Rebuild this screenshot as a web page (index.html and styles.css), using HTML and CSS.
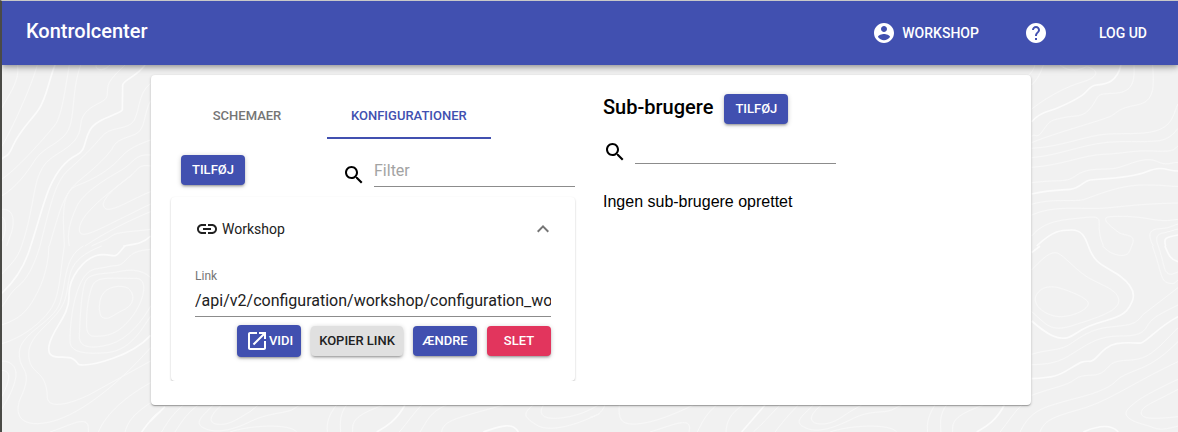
FILE: index.html
```html
<!DOCTYPE html>
<html lang="da">
<head>
<meta charset="utf-8">
<meta name="viewport" content="width=device-width, initial-scale=1">
<title>Kontrolcenter</title>
<link rel="stylesheet" href="styles.css">
</head>
<body>
<header class="app-bar">
  <h1 class="app-title">Kontrolcenter</h1>
  <nav class="app-nav">
    <a class="nav-link" href="#workshop">
      <svg class="icon" viewBox="0 0 24 24" aria-hidden="true"><path d="M12 2C6.480 2 2 6.480 2 12s4.480 10 10 10 10-4.480 10-10S17.520 2 12 2zm0 3c1.660 0 3 1.340 3 3s-1.340 3-3 3-3-1.340-3-3 1.340-3 3-3zm0 14.200c-2.500 0-4.710-1.280-6-3.220.030-1.990 4-3.080 6-3.080 1.990 0 5.970 1.090 6 3.080-1.290 1.940-3.500 3.220-6 3.220z"/></svg>
      Workshop
    </a>
    <a class="nav-link nav-help" href="#help" aria-label="Hjælp">
      <svg class="icon" viewBox="0 0 24 24" aria-hidden="true"><path d="M12 2C6.480 2 2 6.480 2 12s4.480 10 10 10 10-4.480 10-10S17.520 2 12 2zm1 17h-2v-2h2v2zm2.070-7.750l-.900.920C13.450 12.900 13 13.500 13 15h-2v-.500c0-1.100.450-2.100 1.170-2.830l1.240-1.260c.370-.360.590-.860.590-1.410 0-1.100-.900-2-2-2s-2 .900-2 2H8c0-2.210 1.790-4 4-4s4 1.790 4 4c0 .880-.360 1.680-.930 2.250z"/></svg>
    </a>
    <a class="nav-link" href="#logout">Log ud</a>
  </nav>
</header>

<main class="page">
  <svg class="contours" viewBox="0 65 1178 367" preserveAspectRatio="xMidYMin slice" aria-hidden="true">
    <g transform="translate(0 60) scale(.33333)">
      <path d="M53 15C60 65 25 105 5 145M112 15C95 75 45 190 5 260M208 15M248 15M208 15C195 90 185 170 165 195S60 320 5 358M242 15C215 90 225 170 205 210S130 260 105 300 45 385 5 408"/>
      <path d="M288 15C286 35 315 32 330 15M375 15C350 40 325 60 323 85S325 115 300 128 245 155 242 195 215 255 180 277 130 310 115 350 95 470 65 558"/>
      <path d="M452 70C410 100 420 170 395 190S330 200 305 230 245 295 205 330 150 440 120 558M452 122C430 160 438 210 405 223S350 240 340 260 290 320 240 360 180 450 148 558M452 240C380 265 370 285 350 305S290 355 235 375 190 470 193 558"/>
      <path d="M452 285C405 280 400 310 365 330S250 395 230 440 200 520 208 558M452 318C420 312 415 325 395 345S235 455 238 510C240 545 300 505 452 432M452 395C400 415 340 455 318 447 290 430 340 385 395 345M452 455C390 480 310 520 255 558M452 508C400 515 350 515 335 528S300 545 275 558M5 448C40 445 45 480 35 515L20 558M5 470C22 480 18 520 5 545"/>
      <path class="major" d="M165 15C145 65 140 115 115 150S60 210 40 255 20 280 5 298M435 15C410 50 370 60 368 75L367 150C355 165 290 175 270 210S260 270 230 285 170 335 150 380 115 490 92 558M452 528C430 550 410 552 370 558"/>
    </g>
    <g transform="translate(0 246) scale(.33333)">
      <path d="M65 0C50 45 25 60 5 85M120 0C100 65 80 100 55 120S20 165 5 183M147 0C145 75 120 130 95 170S40 225 5 237M193 0C180 80 180 145 155 185S70 275 5 293"/>
      <path d="M250 0C190 35 200 110 180 170S60 260 58 320 105 365 60 460C45 500 55 545 140 530S340 430 452 305M305 0C190 45 215 95 195 160S85 260 86 325 140 365 142 455C145 490 210 475 270 445L452 345"/>
      <path d="M452 10C400 15 395 25 375 45S350 55 320 63 265 60 240 115 210 250 210 285 255 325 320 320 420 260 452 210M452 95C420 65 380 72 350 78S275 80 260 100 240 210 238 275C240 305 275 310 330 295S430 220 452 180M290 105C305 92 360 98 405 97 450 95 432 170 390 220S315 270 285 271 260 240 260 215 270 110 290 105zM305 150C318 120 365 115 385 127 405 145 405 175 370 192S325 225 305 213C295 200 297 165 305 150z"/>
      <path d="M5 345C40 345 55 370 45 405S25 455 5 490M5 373C30 375 30 390 20 420L5 453M150 558C220 535 270 500 265 558M295 558C320 500 380 450 452 410M375 558C385 525 400 505 452 470"/>
      <path class="major" d="M92 0C75 60 45 105 5 142M375 0C360 15 355 27 345 29S315 20 285 30 205 90 207 150 155 250 147 300 195 325 218 338 225 357 250 357 390 335 452 268M425 558C445 530 460 510 480 497"/>
    </g>
    <g transform="translate(150 400) scale(.33333)">
      <path d="M100 15C65 45 50 70 35 96M145 15C110 40 95 65 75 96M190 15C160 45 135 65 155 80 190 105 250 90 300 65S400 40 425 30L450 15M215 15C180 45 170 70 205 73S265 55 300 35L325 15M240 96C300 75 420 70 440 96M560 15C535 45 530 70 532 96M590 15C570 40 570 65 572 96M700 15C620 45 605 60 608 96M815 15C790 40 775 65 748 96M890 15C840 35 830 65 810 96M1060 15C920 55 880 60 875 96M1150 15C1110 45 1130 55 1160 75S1260 85 1350 40M1180 15C1160 50 1190 60 1240 53S1320 30 1345 15"/>
      <path class="major" d="M45 20L0 65M765 15C740 60 710 80 680 96M1000 96C1035 85 1085 60 1105 96"/>
    </g>
    <g transform="translate(590 400) scale(.33333)">
      <path d="M45 15C35 40 20 48 0 52M88 15C85 55 90 75 140 72S260 40 310 15M180 96C250 75 310 45 297 96M380 15C345 45 335 70 322 96M460 15C420 40 410 65 408 96M570 15C540 45 515 75 490 96M625 15C595 45 575 70 555 96M670 15C640 45 610 65 640 80 680 105 740 80 790 55S880 40 905 30L935 15M695 15C655 45 655 70 690 72S750 55 780 35L815 15M720 96C780 75 900 70 920 96M1035 15C1015 45 1010 70 1013 96M1070 15C1050 40 1050 65 1053 96M1180 15C1100 45 1085 60 1088 96M1295 15C1270 40 1255 65 1230 96"/>
      <path class="major" d="M525 15L455 96M1243 15C1220 60 1190 80 1160 96"/>
    </g>
    <g transform="translate(1020 60) scale(.33333)">
      <path d="M45 15C40 35 25 45 20 55M70 15C60 45 50 60 35 75M120 15C150 40 180 28 200 20 235 28 240 50 190 65S90 105 35 147M342 15C345 70 335 98 280 100S240 105 215 140 165 165 130 173 90 180 70 210 50 220 35 228M398 15C402 80 405 125 350 135S295 155 275 167 100 220 35 248"/>
      <path d="M35 265C130 260 200 225 265 222S380 225 420 208 460 160 474 132M35 293C130 285 200 245 300 245S420 245 440 235 465 215 474 205M35 322C130 315 190 285 250 283S340 270 400 273 460 270 474 258M35 368C100 360 130 365 150 357S180 330 230 328 280 328 310 318 380 290 410 304 450 308 474 307M35 433C90 415 160 425 185 420S290 375 370 375 440 380 474 379M35 465C100 435 180 448 240 445S340 432 474 429"/>
      <path d="M35 528C75 480 130 480 190 473S235 480 238 510 245 540 250 558M335 558C350 525 325 528 300 520 265 495 240 472 270 470S340 468 390 477 450 480 474 478M400 558C380 520 390 508 420 506S450 500 474 492M415 558C400 525 420 520 435 518L474 507"/>
      <path class="major" d="M35 185C60 155 90 153 105 147S165 120 185 107 205 78 230 75 290 70 303 15M35 402C90 390 120 390 150 388S190 363 210 360 330 355 380 335 440 333 474 333M50 558C100 510 125 510 155 510S195 530 205 558M437 558C430 535 435 532 474 525"/>
    </g>
    <g transform="translate(1020 246) scale(.33333)">
      <path d="M35 72C60 45 85 20 105 20S150 55 190 85 290 125 296 160 230 215 160 238 80 235 35 197M50 145C65 120 95 120 115 125S205 155 205 172 165 210 125 212 30 180 50 145zM248 0C265 20 290 30 310 28S330 10 335 0M397 0C425 75 420 105 445 111S465 105 474 103M415 0C435 60 430 85 455 85L474 78"/>
      <path d="M35 325C80 310 110 315 140 300S200 250 270 243 345 235 370 205L474 125M35 356C110 355 130 340 170 315S240 270 300 270 370 260 385 235 440 195 474 177M35 448C95 425 140 420 165 400S220 395 245 380 265 345 320 343 390 325 420 300L474 245M0 558C30 495 70 485 120 470S205 450 250 430 280 400 330 380 410 350 474 287M60 558C75 510 140 505 210 480S360 400 474 347"/>
      <path d="M474 400C420 425 370 450 345 470S310 500 325 515 375 535 400 545 455 545 474 540M474 430C400 470 365 480 364 500S400 520 474 512"/>
      <path class="major" d="M205 0C225 60 260 60 300 90S345 145 337 165 320 205 270 220 200 240 160 267 75 260 35 225M435 0C445 25 450 40 474 47M35 398C100 395 115 390 150 368S190 345 210 346 245 300 290 293 350 295 365 290 420 240 474 212M190 558C220 545 270 530 295 558M35 20L60 0"/>
    </g>
  </svg>

  <div class="panel">
    <section class="column configurations">
      <div class="tabs" role="tablist">
        <button class="tab" role="tab" type="button" aria-selected="false">Schemaer</button>
        <button class="tab tab-active" role="tab" type="button" aria-selected="true">Konfigurationer</button>
      </div>
      <div class="toolbar">
        <button class="button" type="button">Tilføj</button>
        <div class="search">
          <svg class="icon" viewBox="0 0 24 24" aria-hidden="true"><path d="M15.500 14h-.790l-.280-.270C15.410 12.590 16 11.110 16 9.500 16 5.910 13.090 3 9.500 3S3 5.910 3 9.500 5.910 16 9.500 16c1.610 0 3.090-.590 4.230-1.570l.270.280v.790l5 4.990L20.490 19l-4.990-5zm-6 0C7.010 14 5 11.990 5 9.500S7.010 5 9.500 5 14 7.010 14 9.500 11.990 14 9.500 14z"/></svg>
          <input class="field" type="text" placeholder="Filter" aria-label="Filter">
        </div>
      </div>
      <article class="config">
        <button class="config-header" type="button" aria-expanded="true">
          <svg class="icon" viewBox="0 0 24 24" aria-hidden="true"><path d="M3.900 12c0-1.710 1.390-3.100 3.100-3.100h4V7H7c-2.760 0-5 2.240-5 5s2.240 5 5 5h4v-1.900H7c-1.710 0-3.100-1.390-3.100-3.100zM8 13h8v-2H8v2zm9-6h-4v1.900h4c1.710 0 3.100 1.390 3.100 3.100s-1.390 3.100-3.100 3.100h-4V17h4c2.760 0 5-2.240 5-5s-2.240-5-5-5z"/></svg>
          <span class="config-name">Workshop</span>
          <svg class="icon chevron" viewBox="0 0 24 24" aria-hidden="true"><path d="M12 8l-6 6 1.410 1.410L12 10.830l4.590 4.580L18 14z"/></svg>
        </button>
        <label class="field-label" for="config-link">Link</label>
        <input class="field" id="config-link" type="text" value="/api/v2/configuration/workshop/configuration_workshop.json">
        <div class="actions">
          <button class="button button-icon" type="button">
            <svg class="icon" viewBox="0 0 24 24" aria-hidden="true"><path d="M19 19H5V5h7V3H5c-1.110 0-2 .900-2 2v14c0 1.100.890 2 2 2h14c1.100 0 2-.900 2-2v-7h-2v7zM14 3v2h3.590l-9.830 9.830 1.410 1.410L19 6.410V10h2V3h-7z"/></svg>Vidi
          </button>
          <button class="button button-neutral" type="button">Kopier link</button>
          <button class="button" type="button">Ændre</button>
          <button class="button button-danger" type="button">Slet</button>
        </div>
      </article>
    </section>

    <section class="column sub-users">
      <div class="section-head">
        <h2 class="section-title">Sub-brugere</h2>
        <button class="button" type="button">Tilføj</button>
      </div>
      <div class="search">
        <svg class="icon" viewBox="0 0 24 24" aria-hidden="true"><path d="M15.500 14h-.790l-.280-.270C15.410 12.590 16 11.110 16 9.500 16 5.910 13.090 3 9.500 3S3 5.910 3 9.500 5.910 16 9.500 16c1.610 0 3.090-.590 4.230-1.570l.270.280v.790l5 4.990L20.490 19l-4.990-5zm-6 0C7.010 14 5 11.990 5 9.500S7.010 5 9.500 5 14 7.010 14 9.500 11.990 14 9.500 14z"/></svg>
        <input class="field" type="text" aria-label="Søg sub-brugere">
      </div>
      <p class="empty">Ingen sub-brugere oprettet</p>
    </section>
  </div>
</main>
</body>
</html>
```
FILE: styles.css
```css
* {
  box-sizing: border-box;
}

body {
  display: flex;
  flex-direction: column;
  min-height: 100vh;
  margin: 0;
  border-top: 1px solid #c8c8c8;
  border-left: 2px solid #4a4a46;
  background: #f1f1f1;
  color: #000;
  font-family: Roboto, "Liberation Sans", sans-serif;
  font-size: 16px;
}

button,
input {
  margin: 0;
  border: 0;
  font-family: inherit;
}

.icon {
  flex: none;
  width: 24px;
  height: 24px;
  fill: currentColor;
}

.app-bar {
  position: relative;
  z-index: 1;
  display: flex;
  align-items: center;
  justify-content: space-between;
  min-height: 64px;
  padding: 0 31px 0 24px;
  background: #4150b0;
  color: #fff;
  box-shadow: 0 2px 4px -1px rgba(0, 0, 0, 0.2), 0 4px 5px rgba(0, 0, 0, 0.14), 0 1px 10px rgba(0, 0, 0, 0.12);
}

.app-title {
  margin: 0;
  padding-bottom: 4px;
  font-size: 20px;
  font-weight: 500;
  line-height: 24px;
}

.app-nav {
  display: flex;
  align-items: center;
  gap: 45px;
}

.nav-link {
  display: flex;
  align-items: center;
  gap: 6px;
  color: inherit;
  font-size: 14px;
  font-weight: 500;
  line-height: 24px;
  text-decoration: none;
  text-transform: uppercase;
}

.nav-help {
  padding-right: 6px;
}

.page {
  position: relative;
  flex: 1;
  padding: 10px 16px 24px 18px;
  overflow: hidden;
}

.contours {
  position: absolute;
  inset: 0 0 0 -2px;
  width: calc(100% + 2px);
  height: 100%;
  fill: none;
  stroke: #f8f8f8;
  stroke-width: 3;
}

.contours .major {
  stroke: #fbfbfb;
  stroke-width: 5;
}

.panel {
  position: relative;
  display: grid;
  grid-template-columns: 1fr 1fr;
  max-width: 880px;
  margin: 0 auto;
  padding: 16px 16px 24px;
  border-radius: 4px;
  background: #fff;
  box-shadow: 0 1px 3px rgba(0, 0, 0, 0.2), 0 1px 1px rgba(0, 0, 0, 0.14), 0 2px 1px -1px rgba(0, 0, 0, 0.12);
}

.column {
  min-width: 0;
}

.configurations {
  padding-right: 16px;
}

.tabs {
  display: flex;
}

.tab {
  min-width: 160px;
  height: 48px;
  padding: 2px 24px 0;
  border-bottom: 2px solid transparent;
  background: none;
  color: #757575;
  font-size: 13px;
  font-weight: 500;
  text-transform: uppercase;
}

.tab-active {
  border-bottom-color: #4150b0;
  color: #4150b0;
}

.toolbar {
  display: flex;
  align-items: flex-start;
  justify-content: space-between;
  padding: 16px 0 10px 14px;
}

.button {
  display: inline-flex;
  align-items: center;
  justify-content: center;
  min-width: 64px;
  min-height: 30px;
  padding: 4px 8px;
  border-radius: 4px;
  background: #4150b0;
  color: #fff;
  font-size: 13px;
  font-weight: 500;
  line-height: 22px;
  text-transform: uppercase;
  box-shadow: 0 1px 5px rgba(0, 0, 0, 0.2), 0 2px 2px rgba(0, 0, 0, 0.14), 0 3px 1px -2px rgba(0, 0, 0, 0.12);
}

.button-neutral {
  background: #e0e0e0;
  color: #212121;
}

.button-danger {
  background: #e2355d;
}

.search {
  display: flex;
  align-items: flex-end;
  gap: 8px;
}

.search .field {
  width: 201px;
}

.field {
  display: block;
  width: 100%;
  height: 32px;
  padding: 0;
  border-bottom: 1px solid #8c8c8c;
  border-radius: 0;
  background: transparent;
  color: #212121;
  font-size: 16px;
  outline: 0;
}

.field::placeholder {
  color: #a3a3a3;
  opacity: 1;
}

.config {
  margin-left: 4px;
  padding: 0 24px 24px;
  border-radius: 4px;
  box-shadow: 0 1px 2px rgba(0, 0, 0, 0.25);
  clip-path: inset(-4px -4px 0);
}

.config-header {
  display: flex;
  align-items: center;
  gap: 3px;
  width: 100%;
  height: 64px;
  padding: 0;
  background: none;
  color: #212121;
  font-size: 14px;
  text-align: left;
}

.config-name {
  flex: 1;
}

.chevron {
  margin-right: -4px;
  color: #757575;
}

.field-label {
  display: block;
  padding: 7px 0 1px;
  color: #757575;
  font-size: 12px;
  line-height: 16px;
}

.actions {
  display: flex;
  align-items: center;
  justify-content: flex-end;
  gap: 10px;
  padding-top: 8px;
}

.sub-users {
  padding-left: 12px;
}

.section-head {
  display: flex;
  align-items: center;
  gap: 11px;
  padding-top: 3px;
}

.section-title {
  margin: 0;
  padding-bottom: 4px;
  font-size: 20px;
  font-weight: 500;
  line-height: 24px;
}

.sub-users .search {
  padding-top: 8px;
}

.empty {
  margin: 28px 0 0;
  font-family: "Liberation Sans", Arial, sans-serif;
  line-height: 20px;
}
```
